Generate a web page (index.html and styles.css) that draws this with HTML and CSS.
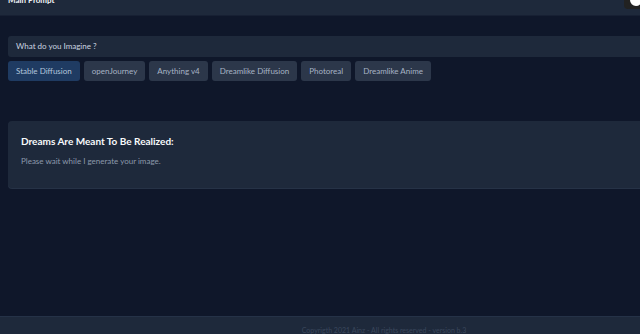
FILE: index.html
```html
<!DOCTYPE html>
<html lang="en">
<head>
    <meta charset="UTF-8">
    <title>Main Prompt</title>
    <link rel="stylesheet" href="styles.css">
</head>
<body>
    <div class="page">
        <header class="topbar">
            <span class="title">Main Prompt</span>
            <span class="avatar"><span class="avatar-dot"></span></span>
        </header>

        <main class="content">
            <div class="prompt-box">What do you Imagine ?</div>
            <div class="models">
                <button class="model active">Stable Diffusion</button>
                <button class="model">openJourney</button>
                <button class="model">Anything v4</button>
                <button class="model">Dreamlike Diffusion</button>
                <button class="model">Photoreal</button>
                <button class="model">Dreamlike Anime</button>
            </div>

            <div class="result-card">
                <h3>Dreams Are Meant To Be Realized:</h3>
                <p>Please wait while I generate your image.</p>
            </div>
        </main>

        <footer class="footer">Copyrigth 2021 Ainz - All rights reserved - version b.3</footer>
    </div>
</body>
</html>
```

FILE: styles.css
```css
html, body {
    margin: 0;
    height: 100%;
}

body {
    background: #0f172a;
    font-family: Lato, 'Open Sans', sans-serif;
    overflow: hidden;
}

.page {
    width: 768px;
    height: 334px;
    display: flex;
    flex-direction: column;
}

.topbar {
    height: 15px;
    background: #1e293b;
    border-bottom: 1px solid #172033;
    display: flex;
    justify-content: space-between;
    align-items: flex-start;
    padding: 0 8px;
    overflow: hidden;
    position: relative;
}
.title {
    color: #f1f5f9;
    font-size: 8px;
    font-weight: 700;
    line-height: 10px;
    margin-top: -5px;
}
.avatar {
    position: absolute;
    left: 624px;
    top: -6px;
    width: 18px;
    height: 15px;
    background: #222;
    border-radius: 4px;
}
.avatar-dot {
    position: absolute;
    left: 6px;
    top: 0;
    width: 12px;
    height: 12px;
    border-radius: 50%;
    background: #fff;
}

.content {
    flex: 1;
    padding: 20px 8px 0 8px;
}

.prompt-box {
    height: 21px;
    background: #1e293b;
    border-radius: 3px;
    color: #cbd5e1;
    font-size: 8px;
    line-height: 21px;
    padding: 0 8px;
}

.models {
    display: flex;
    gap: 4px;
    margin-top: 4px;
}
.model {
    height: 20px;
    border: none;
    border-radius: 3px;
    background: #2c374a;
    color: #a7b3c4;
    font-family: inherit;
    font-size: 8px;
    padding: 0 8px;
}
.model.active {
    background: #1f3b62;
    color: #b3c6dc;
}

.result-card {
    margin-top: 40px;
    height: 67px;
    background: #1e293b;
    border-radius: 4px;
    padding: 0 13px;
    box-shadow: 0 1px 0 #263246;
}
.result-card h3 {
    margin: 0;
    padding-top: 13px;
    color: #f8fafc;
    font-size: 10px;
    font-weight: 700;
    line-height: 14px;
}
.result-card p {
    margin: 8px 0 0 0;
    color: #8d99ab;
    font-size: 8px;
    line-height: 11px;
}

.footer {
    height: 17px;
    background: #1e293b;
    border-top: 1px solid #253247;
    color: #3a475c;
    font-size: 7px;
    text-align: center;
    line-height: 27px;
    overflow: hidden;
}
```
